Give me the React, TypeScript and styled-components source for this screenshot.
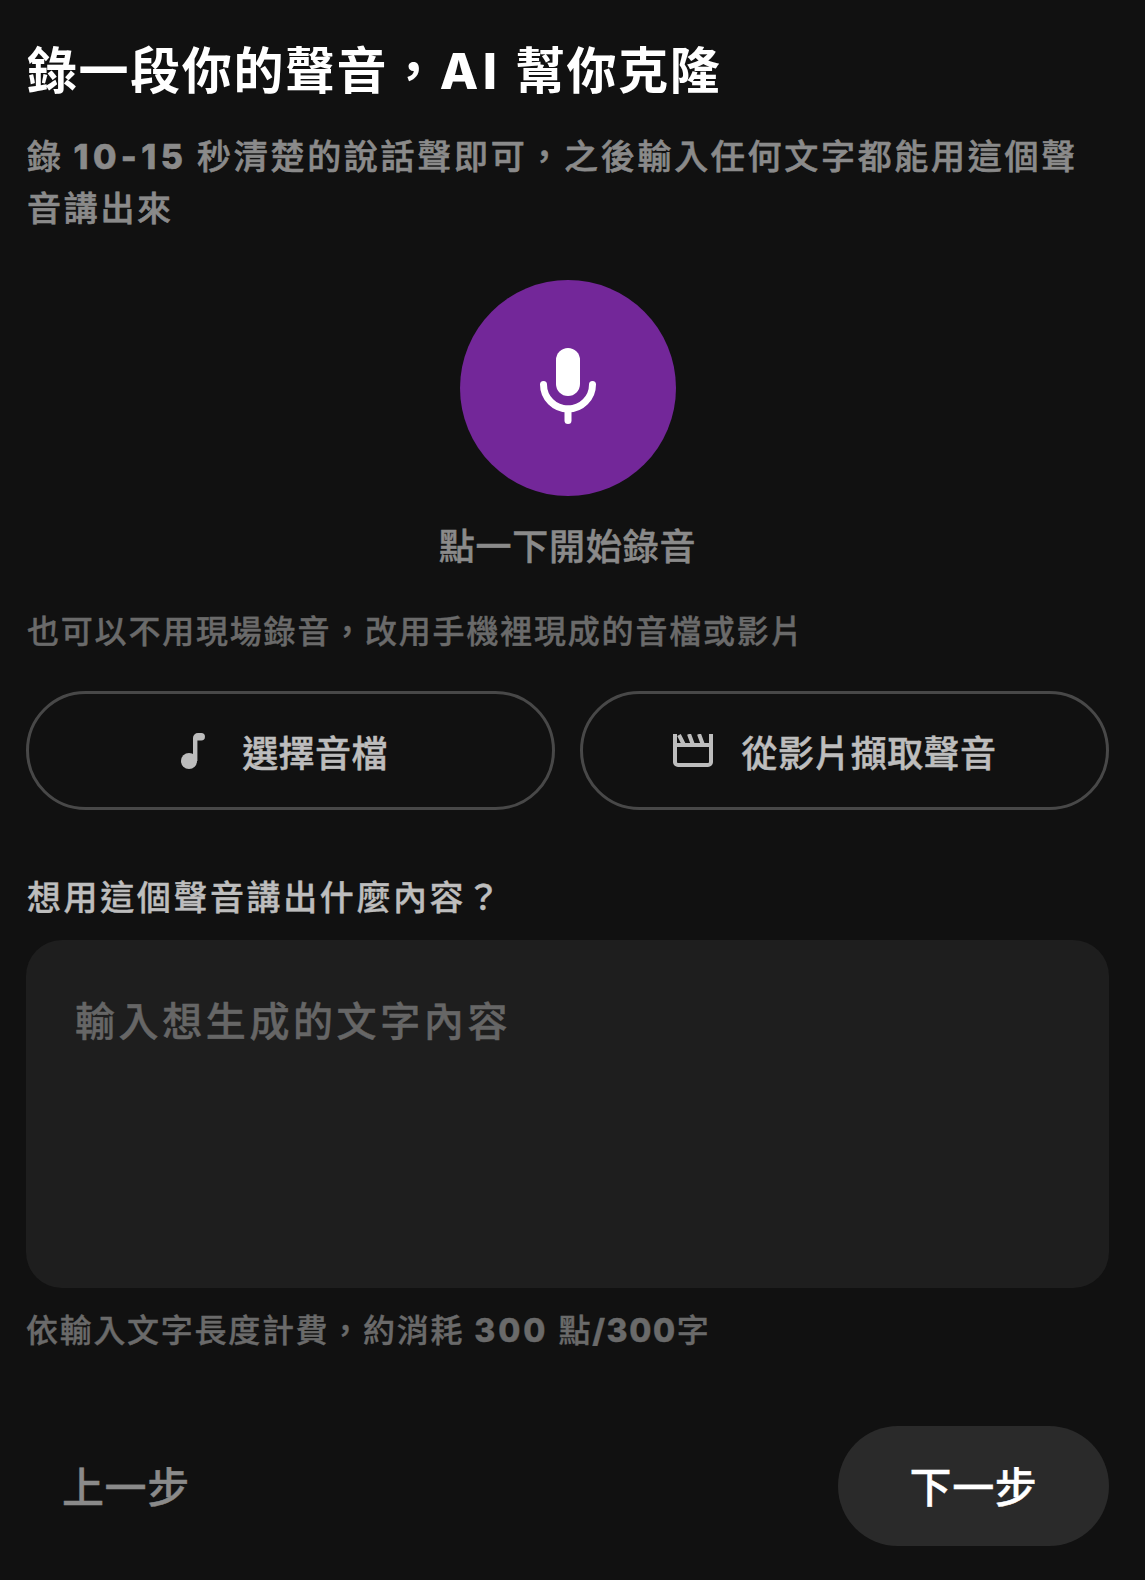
import React from "react";
import styled, { createGlobalStyle, css } from "styled-components";

const GlobalStyle = createGlobalStyle`
  html, body {
    margin: 0;
    padding: 0;
    background: #111111;
  }
  body {
    font-family: Inter, "Noto Sans CJK TC", "Noto Sans", sans-serif;
  }
`;

// the reference weight sits between the installed medium and bold cuts
const thicken = (width: number) => css`
  font-weight: 500;
  -webkit-text-stroke: ${width}px currentColor;
`;

function MicIcon() {
  return (
    <svg width="56" height="76" viewBox="0 0 56 76" fill="none">
      <rect x="16" y="0" width="24" height="48" rx="12" fill="#fff" />
      <path d="M3.5 36.5a24.5 24.5 0 0 0 49 0" stroke="#fff" strokeWidth="7" strokeLinecap="round" />
      <path d="M28 61v11.5" stroke="#fff" strokeWidth="7" strokeLinecap="round" />
    </svg>
  );
}

function NoteIcon() {
  return (
    <svg width="24" height="36" viewBox="0 0 24 36" fill="#bdbdbd">
      <circle cx="8" cy="28" r="8" />
      <path d="M12 28V5a5 5 0 0 1 5-5h3.2a3.75 3.75 0 0 1 0 7.5H16.400V28z" />
    </svg>
  );
}

function ClapperIcon() {
  return (
    <svg width="40" height="33" viewBox="0 0 40 33" fill="none" stroke="#bdbdbd" strokeWidth="4">
      <path d="M2 0v28a3 3 0 0 0 3 3h30a3 3 0 0 0 3-3V0" />
      <path d="M2 11h36" />
      <path d="M6 1l5 10M16 0l4 11M26 0l4 11" />
    </svg>
  );
}

export default function App() {
  return (
    <>
      <GlobalStyle />
      <Page>
        <Title>
          錄一段你的聲音，<Latin>AI</Latin> 幫你克隆
        </Title>
        <Subtitle>
          錄 <Latin $spacing={0.13}>10-15</Latin> 秒清楚的說話聲即可，之後輸入任何文字都能用這個聲音講出來
        </Subtitle>
        <RecordArea>
          <RecordButton>
            <MicIcon />
          </RecordButton>
          <RecordHint>點一下開始錄音</RecordHint>
        </RecordArea>
        <AltNote>也可以不用現場錄音，改用手機裡現成的音檔或影片</AltNote>
        <SourceRow>
          <SourceButton>
            <IconSlot>
              <NoteIcon />
            </IconSlot>
            選擇音檔
          </SourceButton>
          <SourceButton>
            <IconSlot>
              <ClapperIcon />
            </IconSlot>
            從影片擷取聲音
          </SourceButton>
        </SourceRow>
        <FieldLabel>想用這個聲音講出什麼內容？</FieldLabel>
        <TextBox placeholder="輸入想生成的文字內容" />
        <CostNote>
          依輸入文字長度計費，約消耗 <Latin>300</Latin> 點<Latin $spacing={0.05}>/300</Latin>字
        </CostNote>
        <Footer>
          <BackButton>上一步</BackButton>
          <NextButton>下一步</NextButton>
        </Footer>
      </Page>
    </>
  );
}

const Page = styled.div`
  box-sizing: border-box;
  width: 1145px;
  height: 1580px;
  padding: 37px 36px 34px 27px;
  background: #111111;
  display: flex;
  flex-direction: column;
`;

const Latin = styled.span<{ $spacing?: number }>`
  font-weight: 800;
  letter-spacing: ${(p) => p.$spacing ?? 0.09}em;
`;

const Title = styled.h1`
  margin: 0;
  font-size: 50px;
  line-height: 68px;
  font-weight: 700;
  letter-spacing: 1.6px;
  color: #ffffff;
`;

const Subtitle = styled.p`
  margin: 26px 0 0;
  font-size: 34px;
  line-height: 52px;
  ${thicken(0.6)}
  letter-spacing: 2.7px;
  word-spacing: -2px;
  color: #8a8a8a;
`;

const RecordArea = styled.div`
  margin-top: 45px;
  padding-right: 1px;
  display: flex;
  flex-direction: column;
  align-items: center;
`;

const RecordButton = styled.div`
  width: 216px;
  height: 216px;
  border-radius: 50%;
  background: #732799;
  display: flex;
  align-items: center;
  justify-content: center;
  padding-bottom: 4px;
  box-sizing: border-box;
`;

const RecordHint = styled.div`
  margin-top: 26px;
  font-size: 36px;
  line-height: 50px;
  ${thicken(0.5)}
  letter-spacing: 0.8px;
  color: #8a8a8a;
`;

const AltNote = styled.p`
  margin: 37px 0 0;
  font-size: 32px;
  line-height: 46px;
  ${thicken(0.4)}
  letter-spacing: 1.8px;
  color: #6a6a6a;
`;

const SourceRow = styled.div`
  margin-top: 36px;
  margin-left: -1px;
  display: grid;
  grid-template-columns: 1fr 1fr;
  gap: 25px;
`;

const SourceButton = styled.div`
  box-sizing: border-box;
  height: 119px;
  padding-right: 20px;
  border: 3px solid #484848;
  border-radius: 60px;
  display: flex;
  align-items: center;
  justify-content: center;
  gap: 29px;
  font-size: 36px;
  ${thicken(0.5)}
  letter-spacing: 0.4px;
  color: #bdbdbd;
`;

const IconSlot = styled.span`
  width: 40px;
  display: flex;
  justify-content: center;
`;

const FieldLabel = styled.div`
  margin-top: 63px;
  font-size: 34px;
  line-height: 50px;
  ${thicken(0.4)}
  letter-spacing: 2.6px;
  color: #bdbdbd;
`;

const TextBox = styled.textarea`
  display: block;
  box-sizing: border-box;
  margin: 17px 0 0 -1px;
  width: calc(100% + 1px);
  height: 348px;
  padding: 53px 49px;
  border: none;
  border-radius: 36px;
  outline: none;
  resize: none;
  background: #1e1e1e;
  font-family: inherit;
  font-size: 40px;
  line-height: 58px;
  ${thicken(0.5)}
  letter-spacing: 3.6px;
  color: #ffffff;
  &::placeholder {
    color: #666666;
    -webkit-text-stroke: 0.5px #666666;
    opacity: 1;
  }
`;

const CostNote = styled.p`
  margin: 20px 0 0 -1px;
  font-size: 32px;
  line-height: 46px;
  ${thicken(0.4)}
  letter-spacing: 1.7px;
  color: #6a6a6a;
`;

const Footer = styled.div`
  margin-top: auto;
  margin-left: -1px;
  display: flex;
  align-items: center;
  justify-content: space-between;
`;

const BackButton = styled.div`
  padding: 0 0 4px 36px;
  font-size: 42px;
  ${thicken(0.4)}
  letter-spacing: 0.6px;
  color: #8a8a8a;
`;

const NextButton = styled.div`
  box-sizing: border-box;
  width: 271px;
  height: 120px;
  padding-bottom: 4px;
  border-radius: 60px;
  background: #2a2a2a;
  display: flex;
  align-items: center;
  justify-content: center;
  font-size: 42px;
  ${thicken(0.4)}
  letter-spacing: 0.6px;
  color: #ffffff;
`;
